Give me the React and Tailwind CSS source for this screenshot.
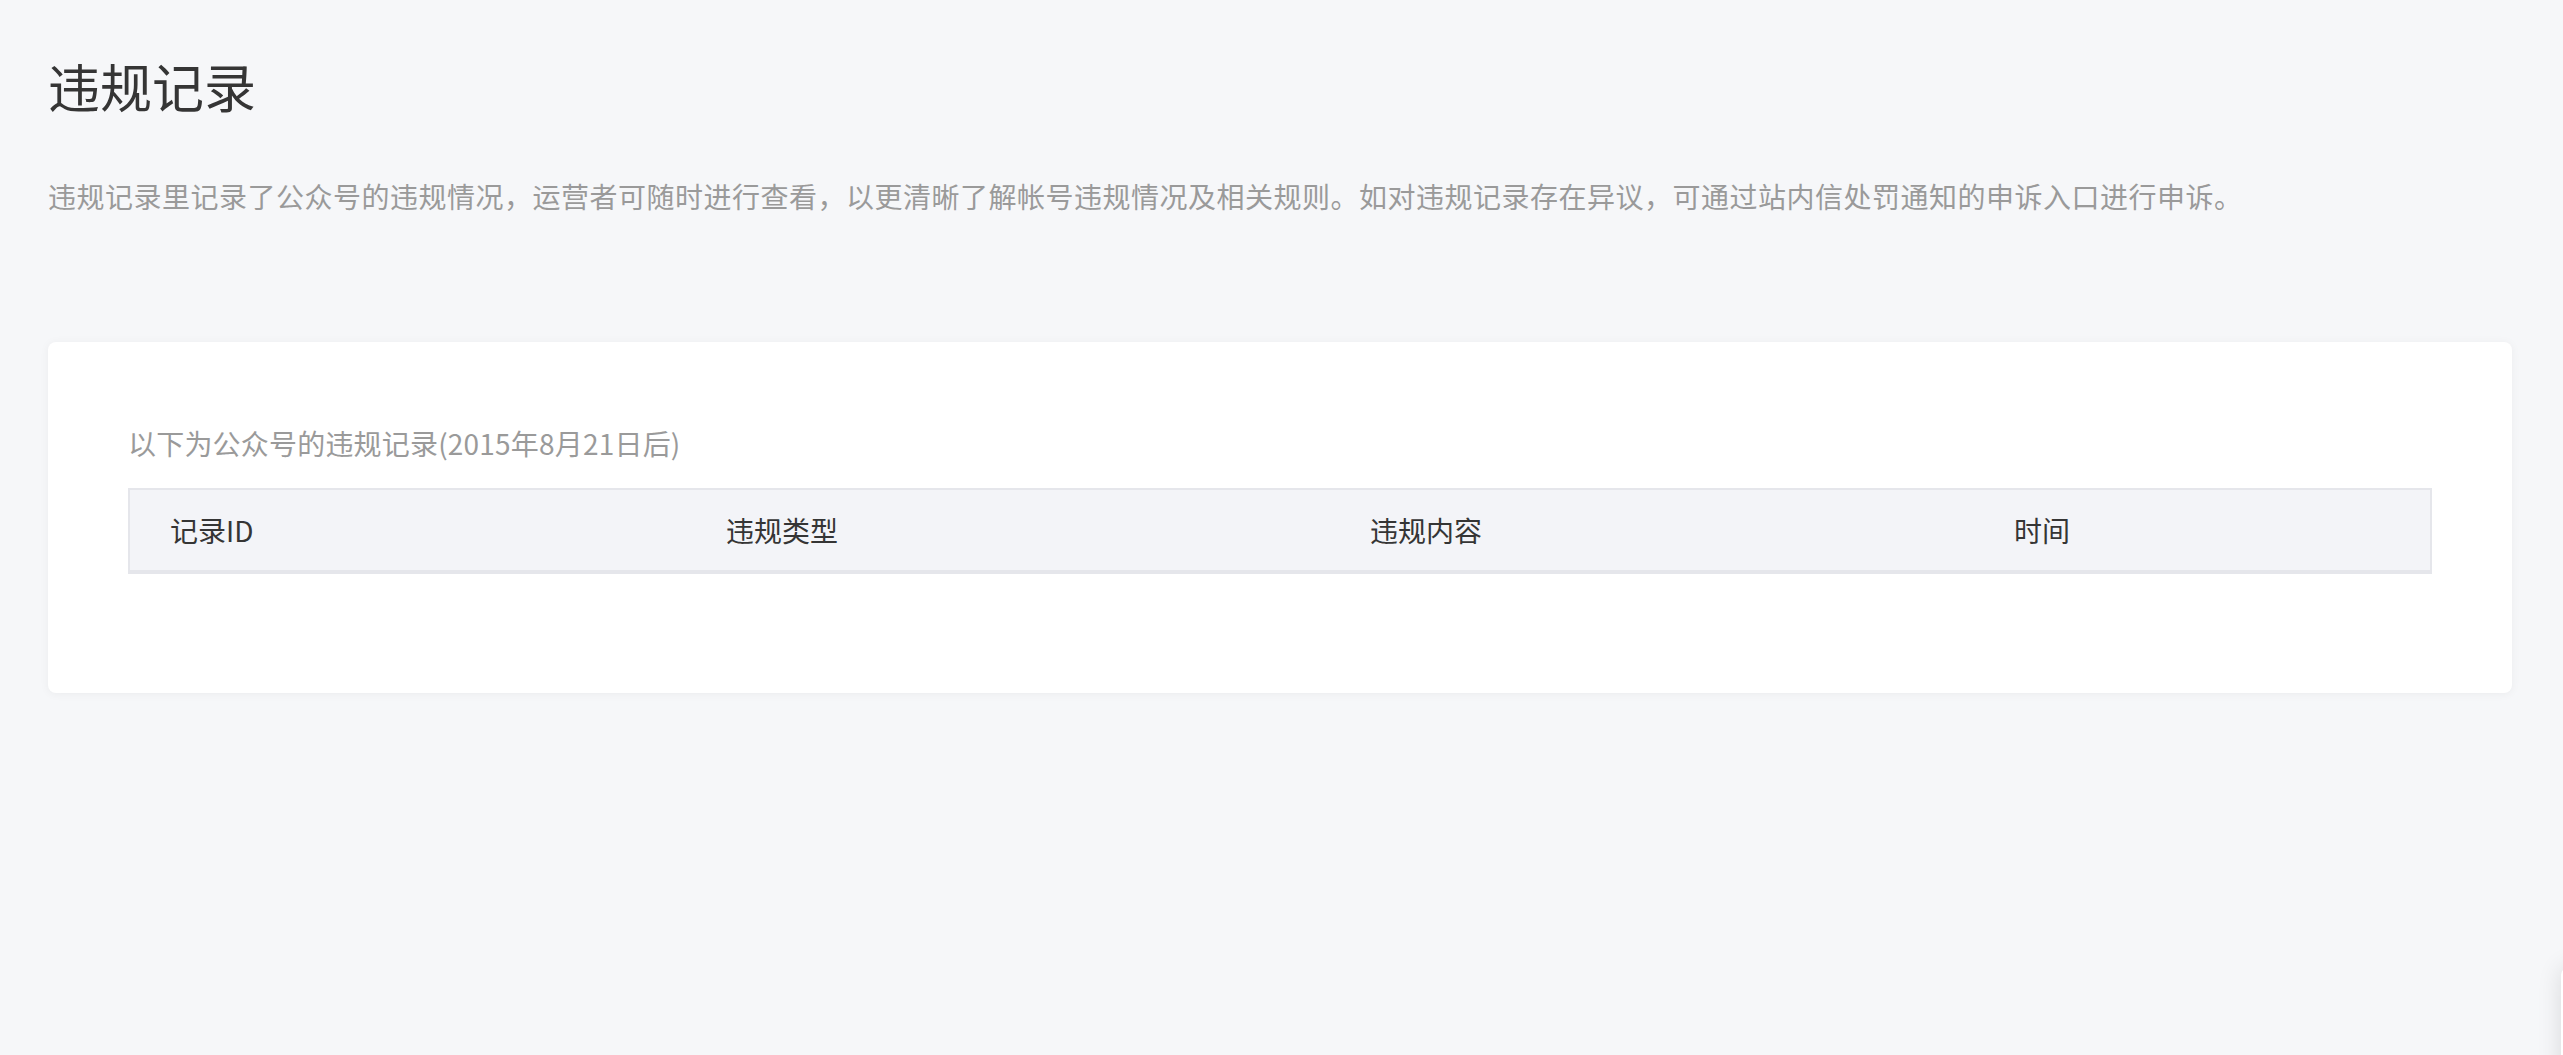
import React from "react";

const columns = ["记录ID", "违规类型", "违规内容", "时间"];

const App = () => {
	return (
		<div
			className="relative min-h-screen overflow-hidden bg-[#f6f7f9] pl-[48px] pr-[51px] pt-[50px] pb-[40px]"
			style={{ fontFamily: '"Noto Sans CJK SC", "Noto Sans", sans-serif' }}
		>
			<h1 className="text-[52px] leading-[72px] font-normal text-[#353535]">
				违规记录
			</h1>
			<p className="mt-[54px] text-[28px] leading-[40px] tracking-[0.5px] text-[#9a9a9a] whitespace-nowrap">
				违规记录里记录了公众号的违规情况，运营者可随时进行查看，以更清晰了解帐号违规情况及相关规则。如对违规记录存在异议，可通过站内信处罚通知的申诉入口进行申诉。
			</p>

			<div className="mt-[126px] bg-white rounded-lg shadow-[0_1px_10px_rgba(0,0,0,0.05)] px-[80px] pt-[81px] pb-[119px]">
				<p className="text-[28px] leading-[40px] tracking-[0.2px] text-[#9a9a9a]">
					以下为公众号的违规记录(2015年8月21日后)
				</p>
				<div className="mt-[25px] border-x-2 border-t-2 border-b-4 border-[#e5e6eb] bg-[#f3f4f8]">
					<div className="grid grid-cols-[556px_644px_644px_1fr] h-[80px] items-center">
						{columns.map((c) => (
							<div
								key={c}
								className="pl-[40px] text-[28px] leading-[40px] text-[#353535]"
							>
								{c}
							</div>
						))}
					</div>
				</div>
			</div>

			<div className="absolute left-[2561px] top-[967px] w-[80px] h-[120px] bg-white rounded-lg shadow-[0_0_24px_rgba(0,0,0,0.12)]" />
		</div>
	);
};

export default App;
